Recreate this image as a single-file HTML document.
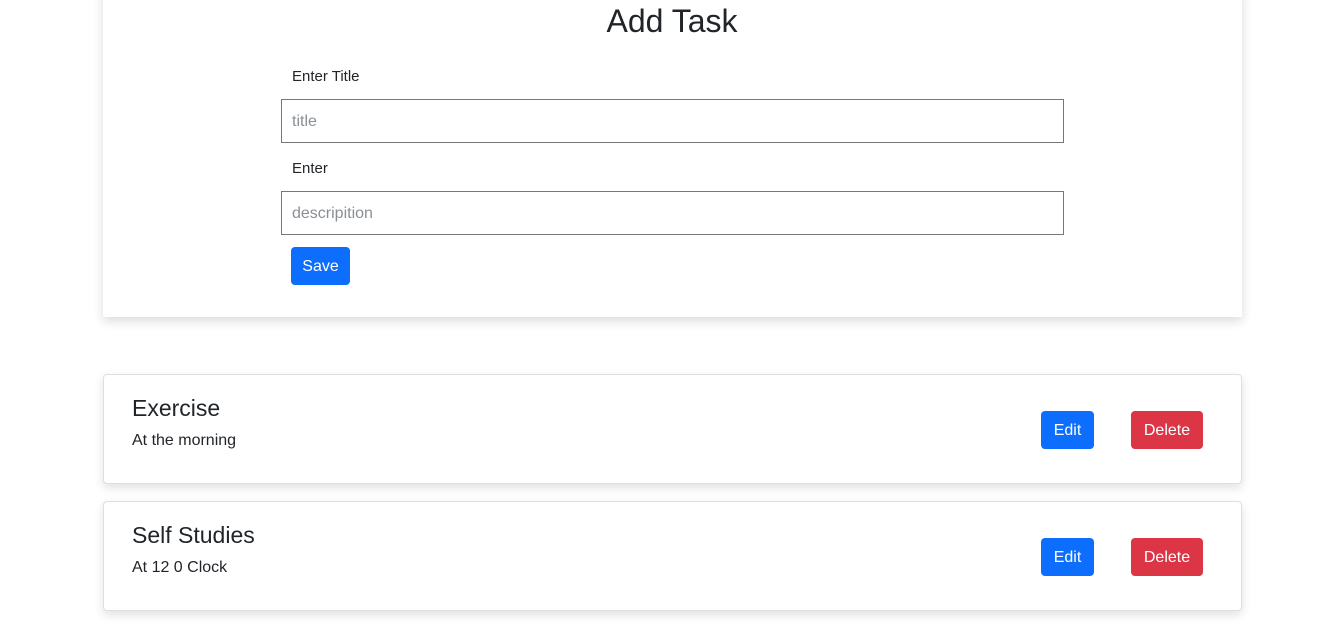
<!DOCTYPE html>
<html><head><style>
*{box-sizing:border-box;margin:0;padding:0}
body{width:1344px;height:634px;background:#fff;font-family:"Liberation Sans",sans-serif;color:#212529;position:relative;overflow:hidden}
.top{position:absolute;left:103px;top:-10px;width:1139px;height:327px;background:#fff;box-shadow:0 4px 10px rgba(0,0,0,.15)}
h1{position:absolute;top:3px;left:0;width:1344px;text-align:center;font-size:32px;font-weight:500}
.lbl{position:absolute;left:292px;font-size:15px}
.inp{position:absolute;left:281px;width:783px;height:44px;border:1px solid #777;font-size:16px;color:#8a8f96;padding:13px 10px 0}
.btn{position:absolute;color:#fff;font-size:16px;border-radius:4px;text-align:center;line-height:40px;height:38px}
.blue{background:#0d6efd}.red{background:#dc3545}
.card{position:absolute;left:103px;width:1139px;height:110px;border:1px solid #dfdfdf;border-radius:4px;background:#fff;box-shadow:0 4px 10px rgba(0,0,0,.12)}
.card h2{position:absolute;left:28px;top:20px;font-size:23px;font-weight:500}
.card p{position:absolute;left:28px;top:57px;font-size:16px}
</style></head><body>
<div class="top"></div>
<h1>Add Task</h1>
<div class="lbl" style="top:68px">Enter Title</div>
<div class="inp" style="top:99px">title</div>
<div class="lbl" style="top:160px">Enter</div>
<div class="inp" style="top:191px">descripition</div>
<div class="btn blue" style="left:291px;top:247px;width:59px">Save</div>
<div class="card" style="top:374px"><h2>Exercise</h2><p>At the morning</p>
<div class="btn blue" style="left:937px;top:36px;width:53px">Edit</div>
<div class="btn red" style="left:1027px;top:36px;width:72px">Delete</div></div>
<div class="card" style="top:501px"><h2>Self Studies</h2><p>At 12 0 Clock</p>
<div class="btn blue" style="left:937px;top:36px;width:53px">Edit</div>
<div class="btn red" style="left:1027px;top:36px;width:72px">Delete</div></div>
</body></html>
